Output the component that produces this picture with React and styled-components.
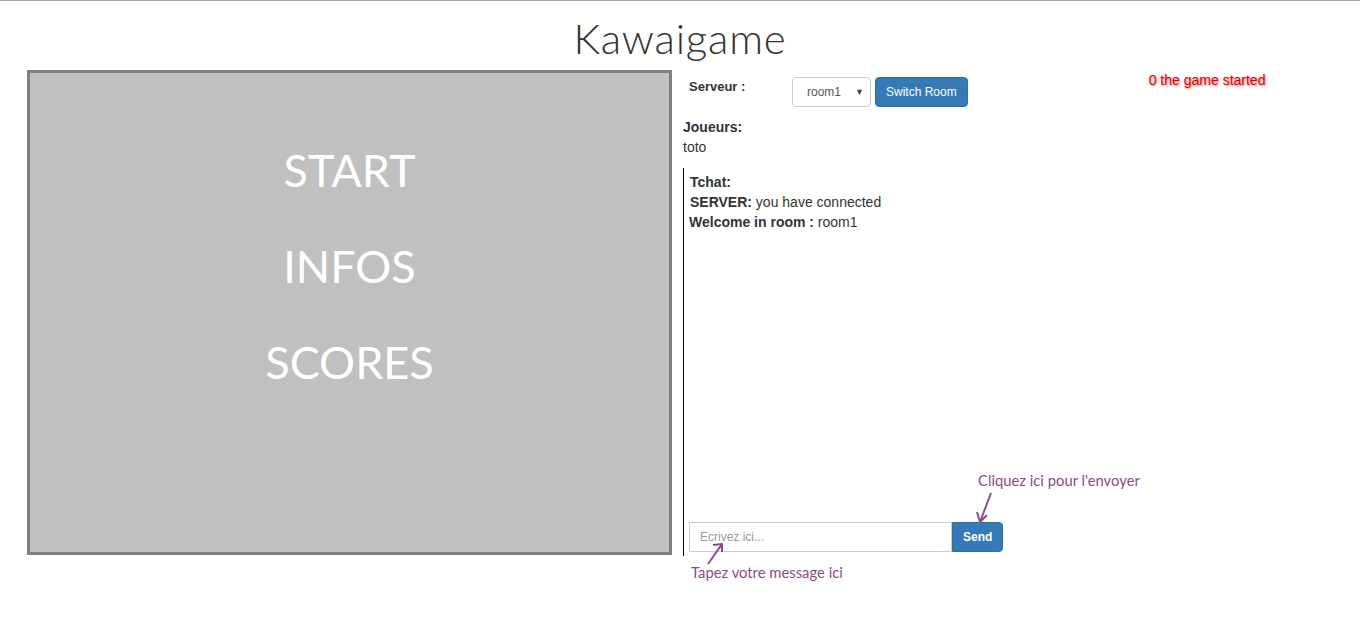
import React from "react";
import styled, { createGlobalStyle } from "styled-components";

const Global = createGlobalStyle`
  html, body { margin: 0; padding: 0; background: #fff; }
  body {
    border-top: 1px solid #a6a6a6;
    min-height: 642px;
    font-family: "Liberation Sans", Arial, sans-serif;
    font-size: 14px;
    color: #333;
  }
`;

const Header = styled.header`
  height: 69px;
  display: flex;
  justify-content: center;
  align-items: center;
  padding-top: 5px;
  box-sizing: border-box;
`;

const Title = styled.h1`
  margin: 0;
  font-family: "Lato", sans-serif;
  font-weight: 300;
  font-size: 42px;
  letter-spacing: 0.8px;
  color: #333;
`;

const Main = styled.main`
  display: flex;
  align-items: flex-start;
  padding-left: 27px;
  padding-bottom: 60px;
`;

const GameCanvas = styled.div`
  width: 645px;
  height: 485px;
  box-sizing: border-box;
  border: 3px solid #808080;
  background: #c0c0c0;
  display: flex;
  flex-direction: column;
  align-items: center;
  padding-top: 49px;
`;

const MenuItem = styled.div`
  font-family: "Lato", "Open Sans", sans-serif;
  font-size: 45px;
  line-height: 96px;
  color: #fff;
`;

const Side = styled.section`
  margin-left: 11px;
  width: 660px;
  display: flex;
  flex-direction: column;
`;

const ServerRow = styled.div`
  display: flex;
  align-items: flex-start;
  margin-top: 7px;
  height: 30px;
`;

const Label = styled.div`
  width: 109px;
  padding-left: 6px;
  padding-top: 2px;
  box-sizing: border-box;
  font-weight: bold;
  font-size: 13px;
`;

const Select = styled.div`
  width: 79px;
  height: 30px;
  box-sizing: border-box;
  border: 1px solid #ccc;
  border-radius: 4px;
  display: flex;
  align-items: center;
  padding-left: 14px;
  padding-right: 6px;
  font-size: 12px;
  color: #555;
  justify-content: space-between;
`;

const Caret = styled.span`
  font-size: 9px;
  color: #444;
`;

const Button = styled.button`
  height: 30px;
  box-sizing: border-box;
  margin-left: ${(p) => p.$gap ?? 4}px;
  padding: 0 ${(p) => p.$px ?? 10}px;
  background: #337ab7;
  border: 1px solid #2e6da4;
  border-radius: ${(p) => (p.$joined ? "0 4px 4px 0" : "4px")};
  color: #fff;
  font-family: "Liberation Sans", Arial, sans-serif;
  font-size: 12px;
  font-weight: ${(p) => (p.$bold ? "bold" : "normal")};
`;

const Status = styled.div`
  margin-left: 181px;
  margin-top: -5px;
  color: #dd0000;
  font-size: 14px;
  text-shadow: 1px 1px 2px rgba(255, 80, 80, 0.85);
`;

const Players = styled.div`
  margin-top: 10px;
  line-height: 20px;
`;

const Bold = styled.b`
  font-weight: bold;
`;

const Chat = styled.div`
  margin-top: 11px;
  height: 388px;
  box-sizing: border-box;
  border-left: 1px solid #000;
  padding: 4px 0 4px 5px;
  display: flex;
  flex-direction: column;
  line-height: 20px;
`;

const Messages = styled.div`
  flex: 1;
`;

const Line = styled.div`
  margin-left: ${(p) => p.$shift || 0}px;
`;

const InputRow = styled.div`
  position: relative;
  display: flex;
`;

const Input = styled.input`
  width: 263px;
  height: 30px;
  box-sizing: border-box;
  border: 1px solid #ccc;
  border-radius: 0;
  padding: 0 10px;
  font-family: "Liberation Sans", Arial, sans-serif;
  font-size: 12px;
  color: #555;
  &::placeholder { color: #999; }
`;

const Note = styled.div`
  position: absolute;
  left: ${(p) => p.$x}px;
  top: ${(p) => p.$y}px;
  white-space: nowrap;
  font-family: "Lato", "Open Sans", sans-serif;
  font-size: 14.8px;
  color: #8b4a8b;
`;

const Arrow = styled.svg`
  position: absolute;
  left: ${(p) => p.$x}px;
  top: ${(p) => p.$y}px;
  overflow: visible;
`;

export default function App() {
  return (
    <>
      <Global />
      <Header>
        <Title>Kawaigame</Title>
      </Header>
      <Main>
        <GameCanvas>
          <MenuItem>START</MenuItem>
          <MenuItem>INFOS</MenuItem>
          <MenuItem>SCORES</MenuItem>
        </GameCanvas>
        <Side>
          <ServerRow>
            <Label>Serveur :</Label>
            <Select>
              <span>room1</span>
              <Caret>▼</Caret>
            </Select>
            <Button $gap={4} $px={10}>Switch Room</Button>
            <Status>0 the game started</Status>
          </ServerRow>
          <Players>
            <Bold>Joueurs:</Bold>
            <div>toto</div>
          </Players>
          <Chat>
            <Messages>
              <Line $shift={1}><Bold>Tchat:</Bold></Line>
              <Line $shift={1}><Bold>SERVER:</Bold> you have connected</Line>
              <Line><Bold>Welcome in room :</Bold> room1</Line>
            </Messages>
            <InputRow>
              <Input placeholder="Ecrivez ici..." />
              <Button $gap={0} $px={10} $bold $joined>Send</Button>
              <Note $x={289} $y={-52}>Cliquez ici pour l'envoyer</Note>
              <Arrow $x={289} $y={-30} width="20" height="32" viewBox="0 0 20 32">
                <path d="M13 1 L2 30" stroke="#8b4a8b" strokeWidth="2" fill="none" />
                <path d="M-1 20 L2 30 L9 23" stroke="#8b4a8b" strokeWidth="2" fill="none" strokeLinejoin="round" />
              </Arrow>
              <Arrow $x={18} $y={20} width="20" height="24" viewBox="0 0 20 24">
                <path d="M1 22 L15 2" stroke="#8b4a8b" strokeWidth="2" fill="none" />
                <path d="M6 3 L15 2 L15 10" stroke="#8b4a8b" strokeWidth="2" fill="none" strokeLinejoin="round" />
              </Arrow>
              <Note $x={2} $y={40}>Tapez votre message ici</Note>
            </InputRow>
          </Chat>
        </Side>
      </Main>
    </>
  );
}
